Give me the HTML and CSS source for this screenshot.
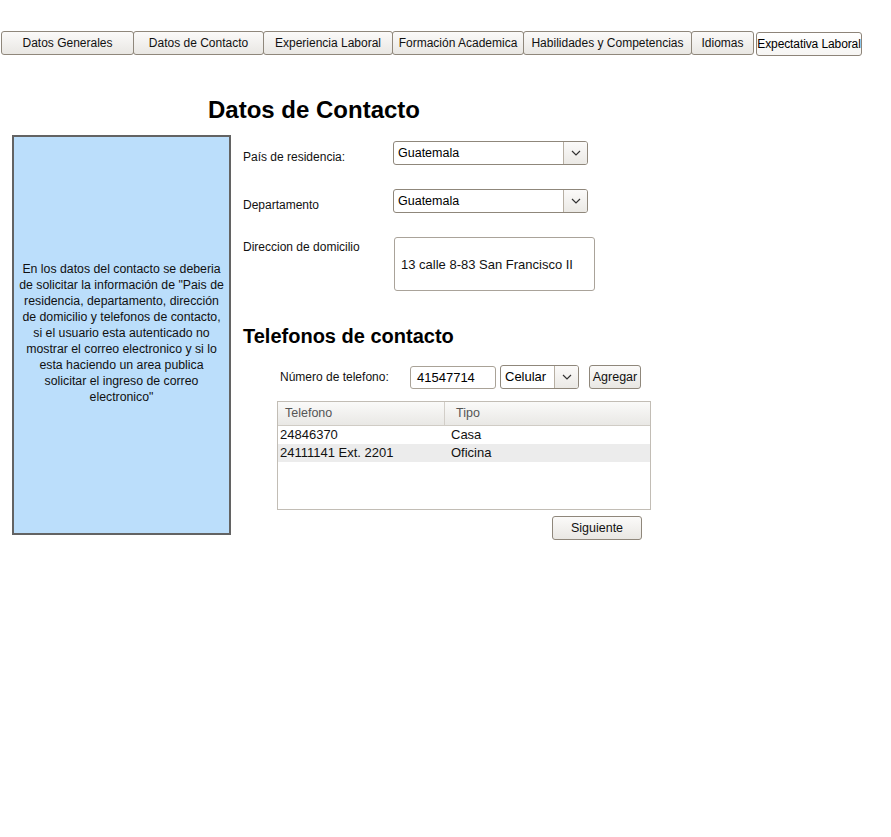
FILE: index.html
```html
<!DOCTYPE html>
<html lang="es">
<head>
<meta charset="utf-8">
<title>Datos de Contacto</title>
<link rel="stylesheet" href="styles.css">
</head>
<body>
<nav class="tabs">
  <button class="tab w-gen">Datos Generales</button>
  <button class="tab w-con">Datos de Contacto</button>
  <button class="tab w-exp">Experiencia Laboral</button>
  <button class="tab w-for">Formación Academica</button>
  <button class="tab w-hab">Habilidades y Competencias</button>
  <button class="tab w-idi">Idiomas</button>
  <button class="tab tab-last w-ept">Expectativa Laboral</button>
</nav>

<h1 class="title">Datos de Contacto</h1>

<div class="main">
  <aside class="note">
    <p>En los datos del contacto se deberia de solicitar la información de "Pais de residencia, departamento, dirección de domicilio y telefonos de contacto, si el usuario esta autenticado no mostrar el correo electronico y si lo esta haciendo un area publica solicitar el ingreso de correo electronico"</p>
  </aside>

  <section class="form">
    <div class="row row-pais">
      <label class="lbl lbl-low">País de residencia:</label>
      <div class="select sel-wide"><span class="sel-text">Guatemala</span><span class="sel-arrow"><svg width="10" height="6" viewBox="0 0 10 6"><path d="M1 1 L5 5 L9 1" fill="none" stroke="#333" stroke-width="1.2"/></svg></span></div>
    </div>
    <div class="row row-dep">
      <label class="lbl lbl-low">Departamento</label>
      <div class="select sel-wide"><span class="sel-text">Guatemala</span><span class="sel-arrow"><svg width="10" height="6" viewBox="0 0 10 6"><path d="M1 1 L5 5 L9 1" fill="none" stroke="#333" stroke-width="1.2"/></svg></span></div>
    </div>
    <div class="row row-dir">
      <label class="lbl">Direccion de domicilio</label>
      <div class="textarea">13 calle 8-83 San Francisco II</div>
    </div>

    <h2 class="subtitle">Telefonos de contacto</h2>

    <div class="phone">
      <div class="phone-add">
        <label class="lbl-phone">Número de telefono:</label>
        <div class="input">41547714</div>
        <div class="select sel-small"><span class="sel-text">Celular</span><span class="sel-arrow"><svg width="10" height="6" viewBox="0 0 10 6"><path d="M1 1 L5 5 L9 1" fill="none" stroke="#333" stroke-width="1.2"/></svg></span></div>
        <button class="btn btn-add">Agregar</button>
      </div>

      <div class="table">
        <div class="thead">
          <div class="th th-1">Telefono</div>
          <div class="th th-2">Tipo</div>
        </div>
        <div class="tr">
          <div class="td td-1">24846370</div>
          <div class="td td-2">Casa</div>
        </div>
        <div class="tr tr-alt">
          <div class="td td-1">24111141 Ext. 2201</div>
          <div class="td td-2">Oficina</div>
        </div>
      </div>

      <div class="actions">
        <button class="btn btn-next">Siguiente</button>
      </div>
    </div>
  </section>
</div>
</body>
</html>
```

FILE: styles.css
```css
* { box-sizing: border-box; }

body {
  margin: 0;
  background: #fff;
  font-family: "Liberation Sans", Arial, sans-serif;
  color: #000;
}

.tabs {
  display: flex;
  align-items: flex-start;
  padding: 31px 0 0 1px;
}

.tab {
  height: 24px;
  padding: 0;
  font-family: "Liberation Sans", Arial, sans-serif;
  font-size: 12px;
  color: #111;
  border: 1px solid #8f877b;
  border-radius: 3px;
  background: linear-gradient(#fbfaf9, #e9e7e3);
  margin-right: -1px;
}
.w-gen { width: 133px; }
.w-con { width: 131px; }
.w-exp { width: 130px; }
.w-for { width: 132px; }
.w-hab { width: 169px; }
.w-idi { width: 63px; margin-right: 2px; }
.w-ept { width: 106px; }

.tab-last {
  margin-top: 1px;
  background: linear-gradient(#ffffff, #f6f5f3);
  font-size: 12px;
  color: #000;
  border-color: #8d8479;
  padding: 0;
  text-align: center;
  white-space: nowrap;
  letter-spacing: -0.1px;
}

.title {
  margin: 39px 0 0 208px;
  font-size: 24px;
  font-weight: bold;
  line-height: 30px;
  height: 30px;
}

.main {
  display: flex;
  align-items: flex-start;
  margin-top: 10px;
}

.note {
  margin-left: 12px;
  width: 219px;
  height: 400px;
  background: #bbdefb;
  border: 2px solid #636363;
  display: flex;
  align-items: center;
  justify-content: center;
  padding: 0 4px;
}
.note p {
  margin: 0 0 4px;
  font-size: 12.3px;
  line-height: 16px;
  text-align: center;
  color: #111;
}

.form {
  margin-left: 12px;
  width: 420px;
  padding-top: 6px;
}

.row {
  display: flex;
  align-items: flex-start;
}
.row-dep { margin-top: 24px; }
.row-dir { margin-top: 24px; }

.lbl {
  width: 150px;
  font-size: 12px;
  line-height: 16px;
  color: #111;
}
.lbl-low { padding-top: 9px; line-height: 15px; }
.row-dir .lbl { padding-top: 2px; width: 151px; }

.select {
  display: flex;
  height: 24px;
  border: 1px solid #8f877b;
  border-radius: 3px;
  background: #fff;
  overflow: hidden;
}
.sel-wide { width: 195px; }
.sel-text {
  flex: 1;
  font-size: 12.5px;
  line-height: 22px;
  padding-left: 4px;
  color: #000;
}
.sel-arrow {
  width: 24px;
  border-left: 1px solid #b7afa3;
  background: linear-gradient(#fbfaf9, #ebe9e5);
  display: flex;
  align-items: center;
  justify-content: center;
}

.textarea {
  width: 201px;
  height: 54px;
  border: 1px solid #aaa39a;
  border-radius: 3px;
  padding: 19px 0 0 6px;
  font-size: 13px;
  line-height: 16px;
  color: #111;
}

.subtitle {
  margin: 33px 0 0;
  font-size: 20px;
  line-height: 24px;
  font-weight: bold;
}

.phone {
  margin-left: 34px;
  width: 374px;
}

.phone-add {
  display: flex;
  align-items: center;
  margin-top: 17px;
  padding-left: 3px;
}
.lbl-phone {
  width: 130px;
  font-size: 12px;
  color: #111;
  padding-bottom: 1px;
}
.input {
  width: 86px;
  height: 23px;
  border: 1px solid #a9a297;
  border-radius: 3px;
  font-size: 13px;
  line-height: 21px;
  padding-left: 6px;
}
.sel-small {
  width: 79px;
  margin-left: 4px;
}
.sel-small .sel-text { font-size: 13px; padding-left: 4px; }

.btn {
  font-family: "Liberation Sans", Arial, sans-serif;
  font-size: 12px;
  color: #111;
  border: 1px solid #8f877b;
  border-radius: 3px;
  background: linear-gradient(#fbfaf9, #e9e7e3);
  padding: 0;
}
.btn-add {
  margin-left: 10px;
  width: 52px;
  height: 24px;
  font-size: 12.5px;
}

.table {
  margin-top: 12px;
  height: 109px;
  border: 1px solid #c2bdb5;
  background: #fff;
}
.thead {
  display: flex;
  height: 24px;
  background: linear-gradient(#fafaf9, #e9e8e5);
  border-bottom: 1px solid #d0ccc5;
}
.th {
  font-size: 12.5px;
  line-height: 23px;
  color: #555;
}
.th-1 {
  width: 167px;
  padding-left: 7px;
  border-right: 1px solid #d2cec8;
}
.th-2 { padding-left: 11px; }

.tr {
  display: flex;
  height: 18px;
}
.tr-alt { background: #ececec; }
.td {
  font-size: 13px;
  line-height: 18px;
  color: #111;
}
.td-1 { width: 171px; padding-left: 2px; }
.td-2 { padding-left: 2px; }

.actions {
  display: flex;
  justify-content: flex-end;
  margin-top: 6px;
  padding-right: 9px;
}
.btn-next {
  width: 90px;
  height: 24px;
  font-size: 12.5px;
}
```
